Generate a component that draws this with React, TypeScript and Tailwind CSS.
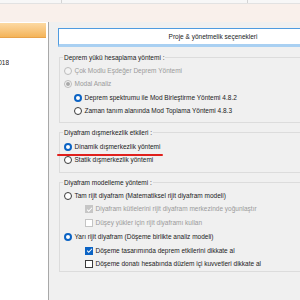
import React from "react";

type RowProps = {
  kind: "radio" | "check";
  checked?: boolean;
  disabled?: boolean;
  indent?: string;
  h: string;
  label: string;
};

const Radio = ({ checked, disabled }: { checked?: boolean; disabled?: boolean }) => {
  if (disabled) {
    return (
      <span className="w-[8px] h-[8px] shrink-0 rounded-full border border-[#bcbcbc] bg-[#f4f4f4] flex items-center justify-center">
        {checked && <span className="w-[4px] h-[4px] rounded-full bg-[#a8a8a8]" />}
      </span>
    );
  }
  if (checked) {
    return <span className="w-[8px] h-[8px] shrink-0 rounded-full border-[2.5px] border-[#0b63c4] bg-white" />;
  }
  return <span className="w-[8px] h-[8px] shrink-0 rounded-full border border-[#3a3a3a] bg-white" />;
};

const Check = ({ checked, disabled }: { checked?: boolean; disabled?: boolean }) => {
  if (checked) {
    return (
      <span
        className={
          "w-[8px] h-[8px] shrink-0 flex items-center justify-center " +
          (disabled ? "bg-[#c6c6c6]" : "bg-[#0b63c4]")
        }
      >
        <svg width="7" height="7" viewBox="0 0 8 8">
          <path d="M1.3 4.2 L3.1 6 L6.8 2" fill="none" stroke="white" strokeWidth="1.2" />
        </svg>
      </span>
    );
  }
  return (
    <span
      className={
        "w-[8px] h-[8px] shrink-0 border bg-white " + (disabled ? "border-[#c4c4c4]" : "border-[#3a3a3a]")
      }
    />
  );
};

const Row = ({ kind, checked, disabled, indent = "", h, label }: RowProps) => (
  <div className={"flex items-center gap-[2.5px] " + h + " " + indent}>
    {kind === "radio" ? <Radio checked={checked} disabled={disabled} /> : <Check checked={checked} disabled={disabled} />}
    <span className={"whitespace-nowrap " + (disabled ? "text-[#9a9a9a]" : "text-[#1a1a1a]")}>{label}</span>
  </div>
);

const Group = ({ title, className, children }: { title: string; className: string; children: React.ReactNode }) => (
  <div className={"relative border border-[#dcdcdc] pl-[4px] " + className}>
    <span className="absolute -top-[5px] left-[3px] bg-[#f0f0f0] px-[1px] leading-[9px] text-[#1a1a1a] whitespace-nowrap">
      {title}
    </span>
    {children}
  </div>
);

export default function App() {
  return (
    <div
      className="relative w-[300px] h-[300px] overflow-hidden bg-[#f0f0f0] flex flex-col text-[6.5px]"
      style={{ fontFamily: '"Liberation Sans", Arial, sans-serif' }}
    >
      {/* tab strip */}
      <div className="h-[4px] shrink-0 bg-[#f7f7f7] border-b border-[#e2e2e2] flex">
        <div className="w-[62px] border-r border-[#d4d4d4]" />
        <div className="w-[186px] border-r border-[#d4d4d4]" />
      </div>
      <div className="h-[18px] shrink-0 bg-[#f9f0eb]" />

      <div className="flex flex-1 min-h-0">
        {/* left list */}
        <div className="w-[49px] shrink-0 bg-white border-r border-[#a8a8a8] pt-[1px]">
          <div className="h-[15px] w-[46px] bg-gradient-to-b from-[#fcd9a2] to-[#f4b458] border-b border-[#e8a24a]" />
          <div className="mt-[20px] h-[10px] w-[9px] overflow-hidden flex justify-end items-center">
            <span className="whitespace-nowrap text-[#1a1a1a]">TBDY 2018</span>
          </div>
        </div>

        {/* settings */}
        <div className="w-[320px] shrink-0 pl-[9px] pt-[6px] flex flex-col">
          <div className="h-[19px] w-[310px] bg-white border border-[#4f9be0] border-b-[3px] border-b-[#a9d0f2] flex items-center justify-center text-[#1a1a1a]">
            Proje &amp; yönetmelik seçenekleri
          </div>

          <Group title="Deprem yükü hesaplama yöntemi :" className="ml-[1px] mt-[10px] pt-[6px] pb-[5px]">
            <Row kind="radio" disabled h="h-[13px]" label="Çok Modlu Eşdeğer Deprem Yöntemi" />
            <Row kind="radio" disabled checked h="h-[14px]" label="Modal Analiz" />
            <Row kind="radio" checked h="h-[13px]" indent="pl-[10px]" label="Deprem spektrumu ile Mod Birleştirme Yöntemi 4.8.2" />
            <Row kind="radio" h="h-[13px]" indent="pl-[10px]" label="Zaman tanım alanında Mod Toplama Yöntemi 4.8.3" />
          </Group>

          <Group title="Diyafram dışmerkezlik etkileri :" className="ml-[1px] mt-[9px] pt-[7px] pb-[5px]">
            <Row kind="radio" checked h="h-[13px]" label="Dinamik dışmerkezlik yöntemi" />
            <Row kind="radio" h="h-[14px]" label="Statik dışmerkezlik yöntemi" />
          </Group>

          <Group title="Diyafram modelleme yöntemi :" className="ml-[1px] mt-[9px] pt-[6px] pb-[1px]">
            <Row kind="radio" h="h-[13px]" label="Tam rijit diyafram (Matematiksel rijit diyafram modeli)" />
            <Row kind="check" disabled checked h="h-[14px]" indent="pl-[21px]" label="Diyafram kütlelerini rijit diyafram merkezinde yoğunlaştır" />
            <Row kind="check" disabled h="h-[13px]" indent="pl-[21px]" label="Düşey yükler için rijit diyaframı kullan" />
            <Row kind="radio" checked h="h-[15px]" label="Yarı rijit diyafram (Döşeme birlikte analiz modeli)" />
            <Row kind="check" checked h="h-[13px]" indent="pl-[21px]" label="Döşeme tasarımında deprem etkilerini dikkate al" />
            <Row kind="check" h="h-[13px]" indent="pl-[21px]" label="Döşeme donatı hesabında düzlem içi kuvvetleri dikkate al" />
          </Group>
        </div>
      </div>

      {/* red annotation underline */}
      <div className="absolute top-[154px] left-[57px] w-[106px] h-[2px] bg-[#e0201c] rounded-full" />
    </div>
  );
}
